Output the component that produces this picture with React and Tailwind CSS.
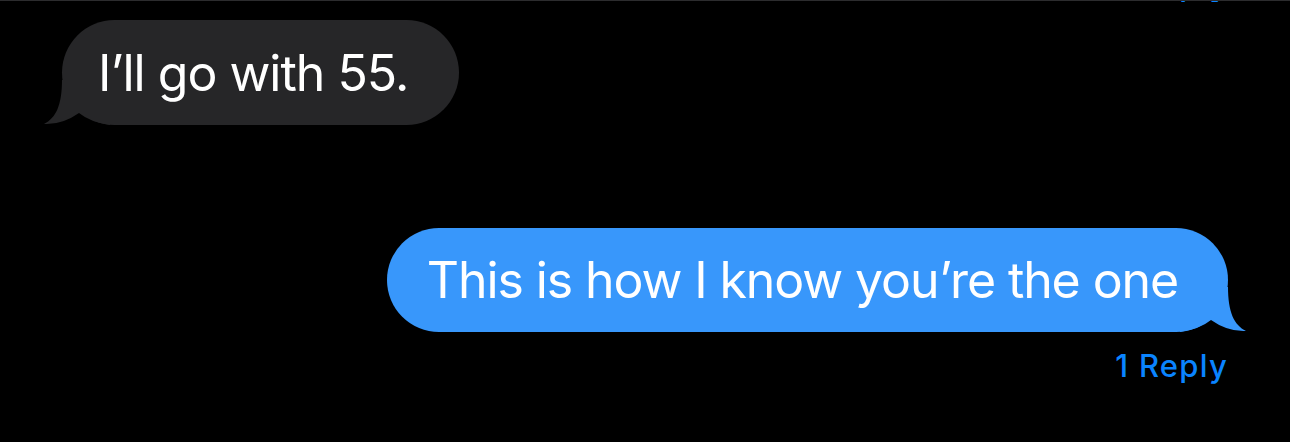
export default function App() {
  const font = { fontFamily: "Inter, 'Liberation Sans', sans-serif" };

  return (
    <div className="w-[1290px] h-[442px] bg-black overflow-hidden relative" style={font}>
      {/* previous message's reply link, scrolled mostly out of view */}
      <div className="h-[2px] overflow-hidden relative border-t border-[#2c2c2e]">
        <div className="flex justify-end pr-[62px] -mt-[33px]">
          <span className="text-[31px] leading-[36px] font-medium tracking-[0.04em] text-[#0a84ff] relative">1 Reply</span>
        </div>
      </div>

      <div className="flex flex-col px-[62px] pt-[18px]">
        {/* incoming */}
        <div className="flex justify-start">
          <div className="relative h-[105px] rounded-[53px] bg-[#262628] flex items-center pl-[36px] pr-[51px]">
            <svg
              className="absolute left-[-18px] bottom-0"
              width="70"
              height="50"
              viewBox="0 0 70 50"
            >
              <path d="M18 5 C18 30 12 43 0 49 Q18 50 35 38 Q46 47 66 50 L66 5 Z" fill="#262628" />
            </svg>
            <span className="relative text-[50px] leading-none tracking-[-0.02em] text-white">I’ll go with 55.</span>
          </div>
        </div>

        {/* outgoing */}
        <div className="flex justify-end mt-[103px]">
          <div className="relative h-[104px] rounded-[52px] bg-[#3897fb] flex items-center pl-[40px] pr-[50px]">
            <svg
              className="absolute right-[-18px] bottom-0"
              width="70"
              height="50"
              viewBox="0 0 70 50"
            >
              <path d="M52 5 C52 30 58 43 70 49 Q52 50 35 38 Q24 47 4 50 L4 5 Z" fill="#3897fb" />
            </svg>
            <span className="relative text-[50px] leading-none tracking-[-0.022em] text-white">This is how I know you’re the one</span>
          </div>
        </div>

        <div className="flex justify-end mt-[16px]">
          <span className="text-[31px] leading-[36px] font-medium tracking-[0.04em] text-[#0a84ff]">1 Reply</span>
        </div>
      </div>
    </div>
  );
}
